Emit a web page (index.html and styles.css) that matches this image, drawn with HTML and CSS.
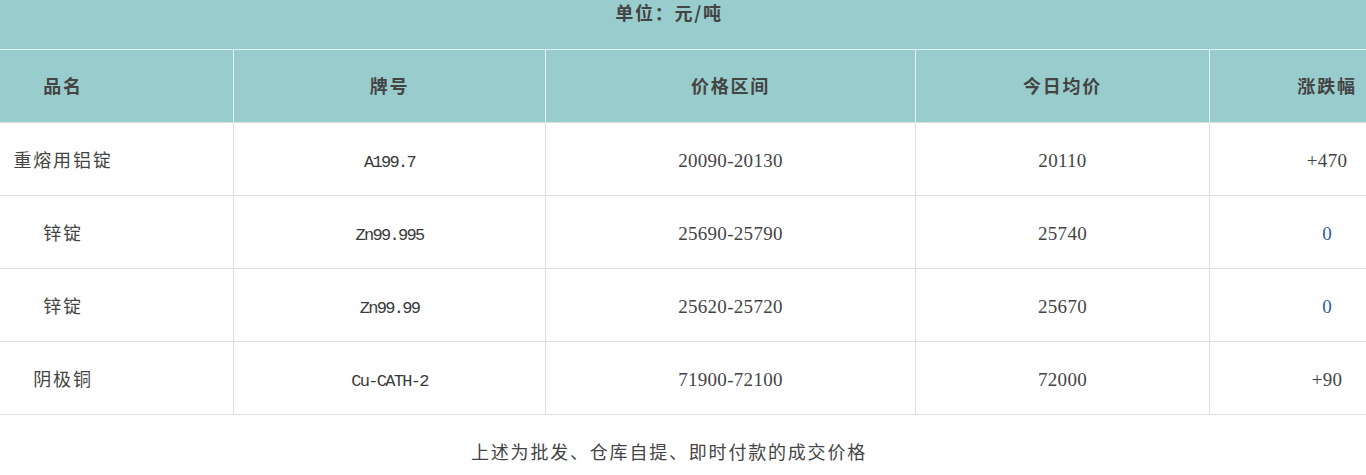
FILE: index.html
```html
<!DOCTYPE html>
<html lang="zh-CN">
<head>
<meta charset="utf-8">
<title>单位：元/吨</title>
<link rel="stylesheet" href="styles.css">
</head>
<body>
<div class="page">
  <table class="price">
    <colgroup>
      <col class="c1"><col class="c2"><col class="c3"><col class="c4"><col class="c5">
    </colgroup>
    <thead>
      <tr class="unit-row"><th colspan="5" class="unit">单位：元/吨</th></tr>
      <tr class="head-row">
        <th class="first">品名</th><th>牌号</th><th>价格区间</th><th>今日均价</th><th class="last">涨跌幅</th>
      </tr>
    </thead>
    <tbody>
      <tr>
        <td class="first">重熔用铝锭</td>
        <td><span class="code">A199.7</span></td>
        <td><span class="num">20090-20130</span></td>
        <td><span class="num">20110</span></td>
        <td class="last"><span class="num">+470</span></td>
      </tr>
      <tr>
        <td class="first">锌锭</td>
        <td><span class="code">Zn99.995</span></td>
        <td><span class="num">25690-25790</span></td>
        <td><span class="num">25740</span></td>
        <td class="last"><span class="num zero">0</span></td>
      </tr>
      <tr>
        <td class="first">锌锭</td>
        <td><span class="code">Zn99.99</span></td>
        <td><span class="num">25620-25720</span></td>
        <td><span class="num">25670</span></td>
        <td class="last"><span class="num zero">0</span></td>
      </tr>
      <tr>
        <td class="first">阴极铜</td>
        <td><span class="code">Cu-CATH-2</span></td>
        <td><span class="num">71900-72100</span></td>
        <td><span class="num">72000</span></td>
        <td class="last"><span class="num">+90</span></td>
      </tr>
    </tbody>
  </table>
  <p class="note">上述为批发、仓库自提、即时付款的成交价格</p>
</div>
</body>
</html>
```

FILE: styles.css
```css
html, body {
  margin: 0;
  padding: 0;
  background: #ffffff;
}

.page {
  width: 1366px;
  font-family: "Noto Sans CJK SC", "Microsoft YaHei", sans-serif;
  color: #444444;
}

.price {
  width: 1366px;
  table-layout: fixed;
  border-collapse: separate;
  border-spacing: 0;
}

.c1 { width: 233px; }
.c2 { width: 312px; }
.c3 { width: 370px; }
.c4 { width: 294px; }
.c5 { width: 157px; }

.price th,
.price td {
  box-sizing: border-box;
  padding: 0;
  text-align: center;
  vertical-align: middle;
  font-size: 18px;
  letter-spacing: 1.8px;
  white-space: nowrap;
}

.price .first {
  padding-right: 107px;
}

.price .last {
  padding-left: 78px;
}

.unit-row .unit {
  height: 49px;
  padding-right: 28px;
  background: #99cccc;
  vertical-align: top;
  line-height: 25px;
  font-weight: bold;
  color: #444444;
}

.head-row th {
  height: 74px;
  padding-bottom: 2px;
  background: #99cccc;
  border-top: 1px solid #e4f1f1;
  border-bottom: 1px solid #dddddd;
  font-weight: bold;
  color: #444444;
}

.head-row th + th {
  border-left: 1px solid #e4f1f1;
}

.price tbody td {
  height: 73px;
  border-bottom: 1px solid #dddddd;
  color: #444444;
}

.price tbody td + td {
  border-left: 1px solid #dddddd;
}

.num {
  font-family: "Liberation Serif", "Times New Roman", serif;
  font-size: 19px;
  letter-spacing: 0.3px;
}

.code {
  font-family: "Liberation Mono", "Courier New", monospace;
  font-size: 17px;
  letter-spacing: -1.7px;
  color: #3a3a3a;
}

.zero {
  color: #2f5d9b;
}

.note {
  margin: 22px 0 0;
  padding-right: 28px;
  line-height: 28px;
  text-align: center;
  font-size: 18px;
  letter-spacing: 1.8px;
  color: #444444;
}
```
